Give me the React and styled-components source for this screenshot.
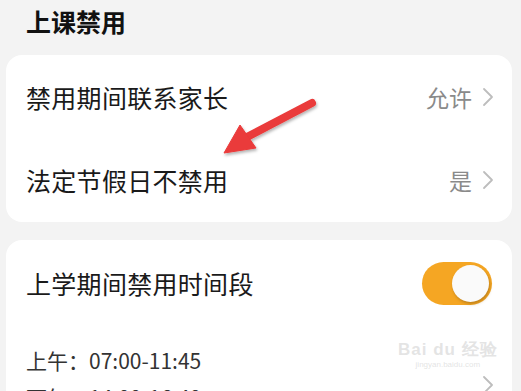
import styled, { createGlobalStyle } from "styled-components";

const GlobalStyle = createGlobalStyle`
  html, body {
    margin: 0;
    padding: 0;
    background: #f3f3f3;
    font-family: "Noto Sans CJK SC", "Noto Sans", sans-serif;
    overflow: hidden;
  }
`;

const Page = styled.div`
  position: relative;
  width: 521px;
  height: 391px;
  overflow: hidden;
  background: #f3f3f3;
`;

const Title = styled.div`
  height: 42px;
  line-height: 42px;
  padding-left: 26px;
  margin-bottom: 13px;
  font-size: 25px;
  font-weight: 700;
  color: #111;
`;

const Card = styled.div`
  margin: 0 9px 18px 6px;
  background: #fff;
  border-radius: 16px;
  padding: ${(p) => p.$pad || "0"};
`;

const Row = styled.div`
  display: flex;
  align-items: center;
  justify-content: space-between;
  height: ${(p) => p.$h || 83}px;
  padding: 0 18px 0 20px;
`;

const Label = styled.span`
  font-size: 25px;
  color: #1a1a1a;
  letter-spacing: 0.3px;
`;

const Value = styled.span`
  display: flex;
  align-items: center;
  gap: 10px;
  font-size: 23px;
  color: #8a8a8a;
`;

const Toggle = styled.div`
  width: 70px;
  height: 43px;
  border-radius: 22px;
  background: #f5a623;
  display: flex;
  align-items: center;
  justify-content: flex-end;
  padding-right: 3px;
  box-sizing: border-box;
  margin-right: 2px;
`;

const Knob = styled.div`
  width: 37px;
  height: 37px;
  border-radius: 50%;
  background: #fafafa;
  box-shadow: 1px 2px 3px rgba(150, 100, 20, 0.55);
`;

const TimeBlock = styled.div`
  display: flex;
  align-items: center;
  justify-content: space-between;
  padding: 16px 18px 0 20px;
`;

const TimeList = styled.div`
  display: flex;
  flex-direction: column;
`;

const TimeLine = styled.div`
  font-size: 21px;
  line-height: 37px;
  color: #333;
`;

const Chevron = ({ color = "#bdbdbd" }) => (
  <svg width="12" height="20" viewBox="0 0 12 20">
    <path d="M2 2 L10 10 L2 18" fill="none" stroke={color} strokeWidth="1.8" strokeLinecap="round" strokeLinejoin="round" />
  </svg>
);

const ChevronSlot = styled.div`
  margin-top: 12px;
  display: flex;
`;

const Arrow = styled.svg`
  position: absolute;
  left: 215px;
  top: 90px;
  overflow: visible;
`;

const Watermark = styled.div`
  position: absolute;
  left: 398px;
  top: 338px;
  color: rgba(205, 205, 205, 0.55);
  font-family: "Liberation Sans", sans-serif;
  text-align: center;
`;

const MarkTop = styled.div`
  font-size: 17px;
  font-weight: 700;
  letter-spacing: 1px;
`;

const MarkBottom = styled.div`
  font-size: 8px;
  margin-top: -1px;
`;

export default function App() {
  return (
    <Page>
      <GlobalStyle />
      <Title>上课禁用</Title>
      <Card>
        <Row>
          <Label>禁用期间联系家长</Label>
          <Value>
            允许
            <Chevron />
          </Value>
        </Row>
        <Row $h={84}>
          <Label>法定节假日不禁用</Label>
          <Value>
            是
            <Chevron />
          </Value>
        </Row>
      </Card>
      <Card $pad="0 0 20px 0">
        <Row $h={86}>
          <Label>上学期间禁用时间段</Label>
          <Toggle>
            <Knob />
          </Toggle>
        </Row>
        <TimeBlock>
          <TimeList>
            <TimeLine>上午：07:00-11:45</TimeLine>
            <TimeLine>下午：14:00-16:40</TimeLine>
          </TimeList>
          <ChevronSlot>
            <Chevron />
          </ChevronSlot>
        </TimeBlock>
      </Card>
      <Arrow width="110" height="75">
        <defs>
          <filter id="sh" x="-20%" y="-20%" width="150%" height="150%">
            <feDropShadow dx="1" dy="2" stdDeviation="1.5" floodColor="#000" floodOpacity="0.3" />
          </filter>
        </defs>
        <g filter="url(#sh)" fill="#ea3a3a" stroke="#ea3a3a">
          <line x1="97" y1="13" x2="30" y2="48" strokeWidth="8" strokeLinecap="round" />
          <polygon points="9,63 25,35 41,58" strokeWidth="1" strokeLinejoin="round" />
        </g>
      </Arrow>
      <Watermark>
        <MarkTop>Bai du 经验</MarkTop>
        <MarkBottom>jingyan.baidu.com</MarkBottom>
      </Watermark>
    </Page>
  );
}
